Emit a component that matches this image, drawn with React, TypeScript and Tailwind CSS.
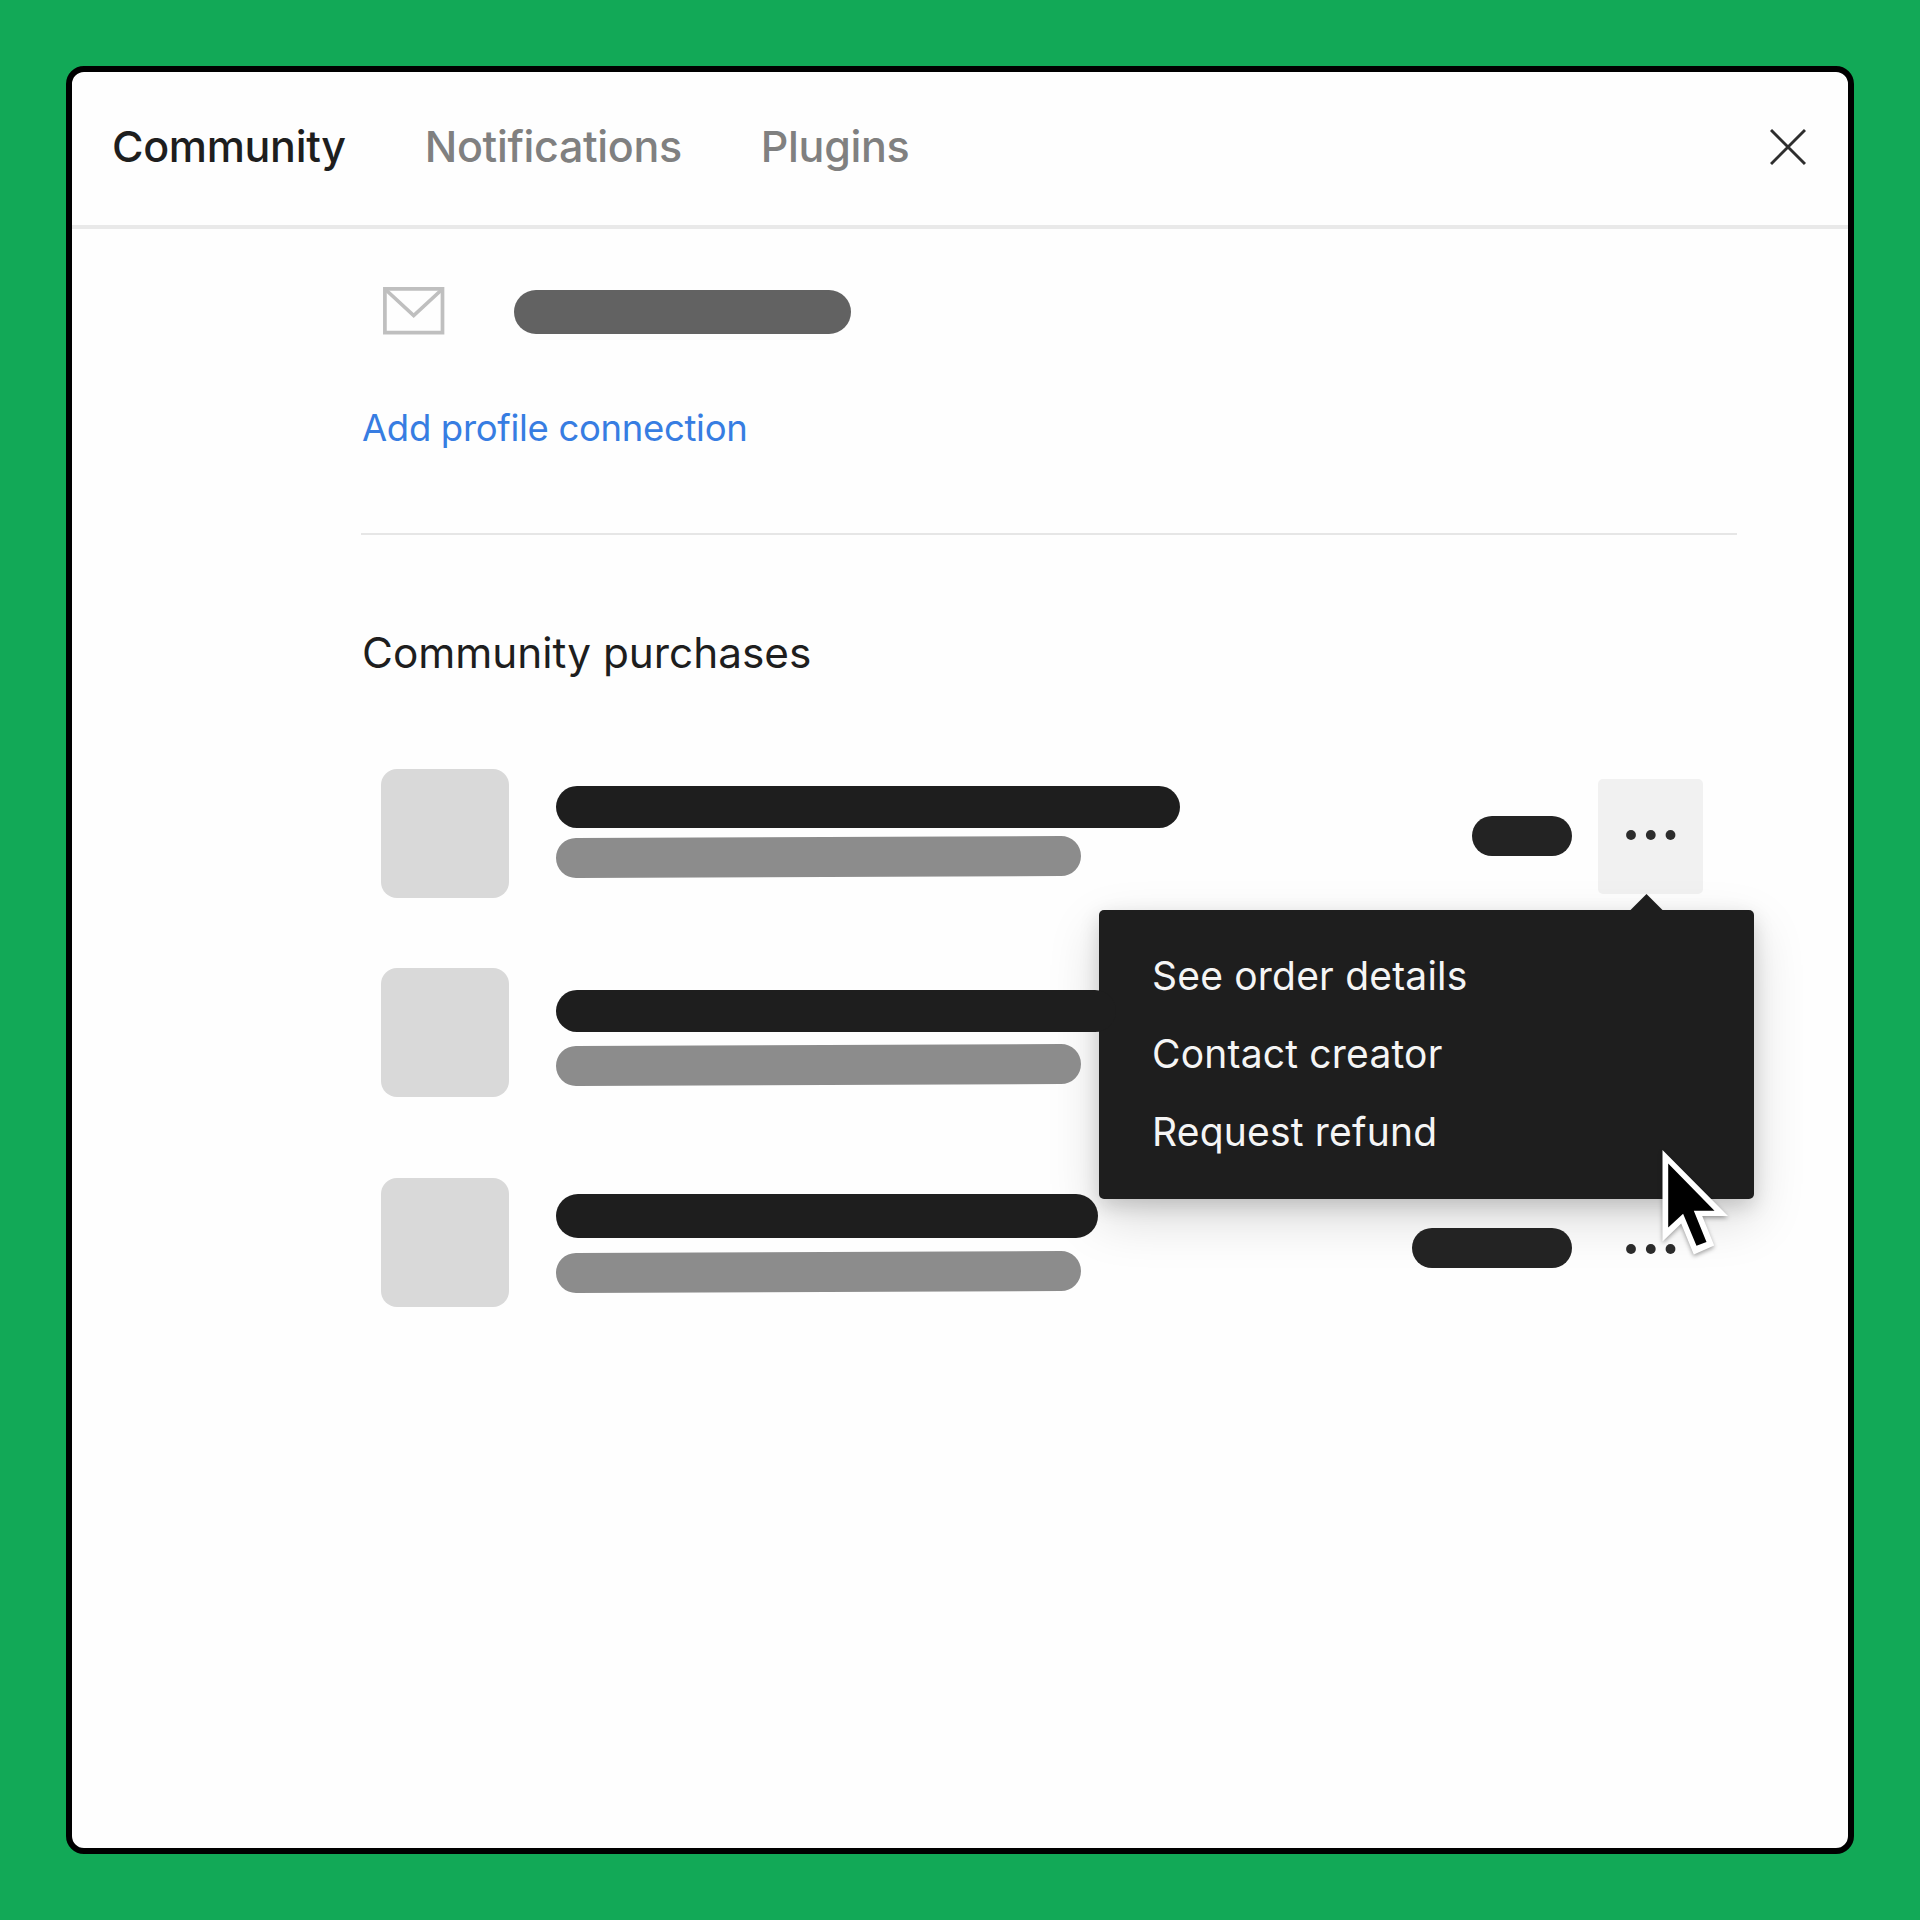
import { clsx } from "clsx";

interface Purchase {
  id: number;
  rowClass: string;
  titleClass: string;
  creatorClass: string;
  priceClass?: string;
  menuOpen?: boolean;
}

const tabs = ["Community", "Notifications", "Plugins"];

const menuItems = ["See order details", "Contact creator", "Request refund"];

const purchases: Purchase[] = [
  {
    id: 1,
    rowClass: "mt-[88px]",
    titleClass: "mt-[17px] h-[42px] w-[624px]",
    creatorClass: "mt-[9px]",
    priceClass: "mt-[47px] w-[100px]",
    menuOpen: true,
  },
  {
    id: 2,
    rowClass: "mt-[71px]",
    titleClass: "mt-[22px] h-[42px] w-[560px]",
    creatorClass: "mt-[13px]",
  },
  {
    id: 3,
    rowClass: "mt-[82px]",
    titleClass: "mt-[16px] h-[44px] w-[542px]",
    creatorClass: "mt-[14px]",
    priceClass: "mt-[50px] w-[160px]",
  },
];

function MailIcon() {
  return (
    <svg width="62" height="48" viewBox="0 0 62 48" fill="none" stroke="#bfbfbf" strokeWidth="3.7">
      <path d="M1.9 1.9h57.6v43.8H1.9z" />
      <path d="M2.5 2.5l28.2 26 28.2-26" />
    </svg>
  );
}

function CloseIcon() {
  return (
    <svg width="36" height="36" viewBox="0 0 36 36" fill="none" stroke="#2e2e2e" strokeWidth="2.9">
      <path d="M1 1l34 34M35 1L1 35" />
    </svg>
  );
}

function DotsIcon() {
  return (
    <svg width="50" height="10" viewBox="0 0 50 10" fill="#2c2c2c">
      <circle cx="5" cy="5" r="4.9" />
      <circle cx="24.8" cy="5" r="4.9" />
      <circle cx="44.5" cy="5" r="4.9" />
    </svg>
  );
}

function Cursor() {
  return (
    <svg
      className="absolute left-[563px] top-[240px] drop-shadow-[0_2px_2px_rgba(0,0,0,0.35)]"
      width="68"
      height="106"
      viewBox="0 0 68 106"
    >
      <path fill="#fff" d="M.5 0L66 66H40.2l12 29.4-20.4 9L19.2 73.4.5 91.4z" />
      <path d="M6.2 13.4l46.3 47.3H31.8l12.7 31.3-10 3.7-13.4-32L6.2 77.4z" />
    </svg>
  );
}

function OrderMenu() {
  return (
    <div className="absolute -right-[51px] top-[141px] z-30 h-[289px] w-[655px] rounded-[5px] bg-[#1e1e1e] pl-[53px] pt-[37px] shadow-[0_7px_20px_rgba(0,0,0,0.15),0_20px_52px_rgba(0,0,0,0.15)]">
      <svg className="absolute -top-4 left-[531px]" width="33" height="17" viewBox="0 0 33 17">
        <path fill="#1e1e1e" d="M16.5 0L33 16.5H0z" />
      </svg>
      <ul>
        {menuItems.map((item) => (
          <li key={item} className="h-[78px] text-[39px] leading-[58px] tracking-[0.2px] text-[#f5f5f5]">
            {item}
          </li>
        ))}
      </ul>
      <Cursor />
    </div>
  );
}

function PurchaseRow({ purchase }: { purchase: Purchase }) {
  return (
    <div className={clsx("relative flex h-[128px] w-[1322px] items-start", purchase.rowClass)}>
      <div className="h-[128.5px] w-[128px] rounded-2xl bg-[#d9d9d9]" />
      <div className="relative z-40 ml-[47px]">
        <div className={clsx("rounded-full bg-[#1e1e1e]", purchase.titleClass)} />
        <div
          className={clsx(
            "h-[40px] w-[524.5px] -rotate-[0.22deg] rounded-full bg-[#8c8c8c]",
            purchase.creatorClass
          )}
        />
      </div>
      {purchase.priceClass && (
        <>
          <div
            className={clsx(
              "relative ml-auto h-[40px] rounded-full bg-[#232323]",
              purchase.menuOpen ? "z-20" : "z-40",
              purchase.priceClass
            )}
          />
          <button
            className={clsx(
              "ml-[26px] flex h-[115px] w-[105px] items-center justify-center rounded-[5px]",
              purchase.menuOpen ? "mt-[10px] bg-[#f1f1f1] pb-[4px]" : "relative z-20 mt-[14px] pb-[2px]"
            )}
          >
            <DotsIcon />
          </button>
        </>
      )}
      {purchase.menuOpen && <OrderMenu />}
    </div>
  );
}

export default function App() {
  return (
    <div className="h-[1920px] w-[1920px] bg-[#12a957] p-[66px] font-['Inter',sans-serif]">
      <div className="h-full rounded-[18px] border-[6px] border-black bg-[#fefefe]">
        <header className="flex h-[157px] items-center border-b-[4px] border-[#e9e9e9] pl-[40px] pr-[42px]">
          <nav className="flex gap-[79px] pb-[5px]">
            {tabs.map((tab, i) => (
              <span
                key={tab}
                className={clsx(
                  "text-[43px] font-medium leading-[56px] tracking-[-0.33px]",
                  i === 0 ? "text-[#1e1e1e]" : "text-[#808080]"
                )}
              >
                {tab}
              </span>
            ))}
          </nav>
          <button className="ml-auto pb-[4px]">
            <CloseIcon />
          </button>
        </header>

        <main className="pl-[289px] pr-[111px]">
          <div className="flex items-start pl-[22px] pt-[58px]">
            <MailIcon />
            <div className="ml-[69px] mt-[3px] h-[44px] w-[337px] rounded-full bg-[#626262]" />
          </div>
          <a className="mt-[69px] block h-[48px] pl-px text-[36.5px] leading-[48px] tracking-[-0.32px] text-[#377de2]">
            Add profile connection
          </a>
          <hr className="mt-[81px] border-t-2 border-[#e6e6e6]" />
          <h2 className="mt-[90px] h-[56px] pl-px text-[42.3px] leading-[56px] text-[#1e1e1e]">
            Community purchases
          </h2>
          <div className="pl-5">
            {purchases.map((purchase) => (
              <PurchaseRow key={purchase.id} purchase={purchase} />
            ))}
          </div>
        </main>
      </div>
    </div>
  );
}
